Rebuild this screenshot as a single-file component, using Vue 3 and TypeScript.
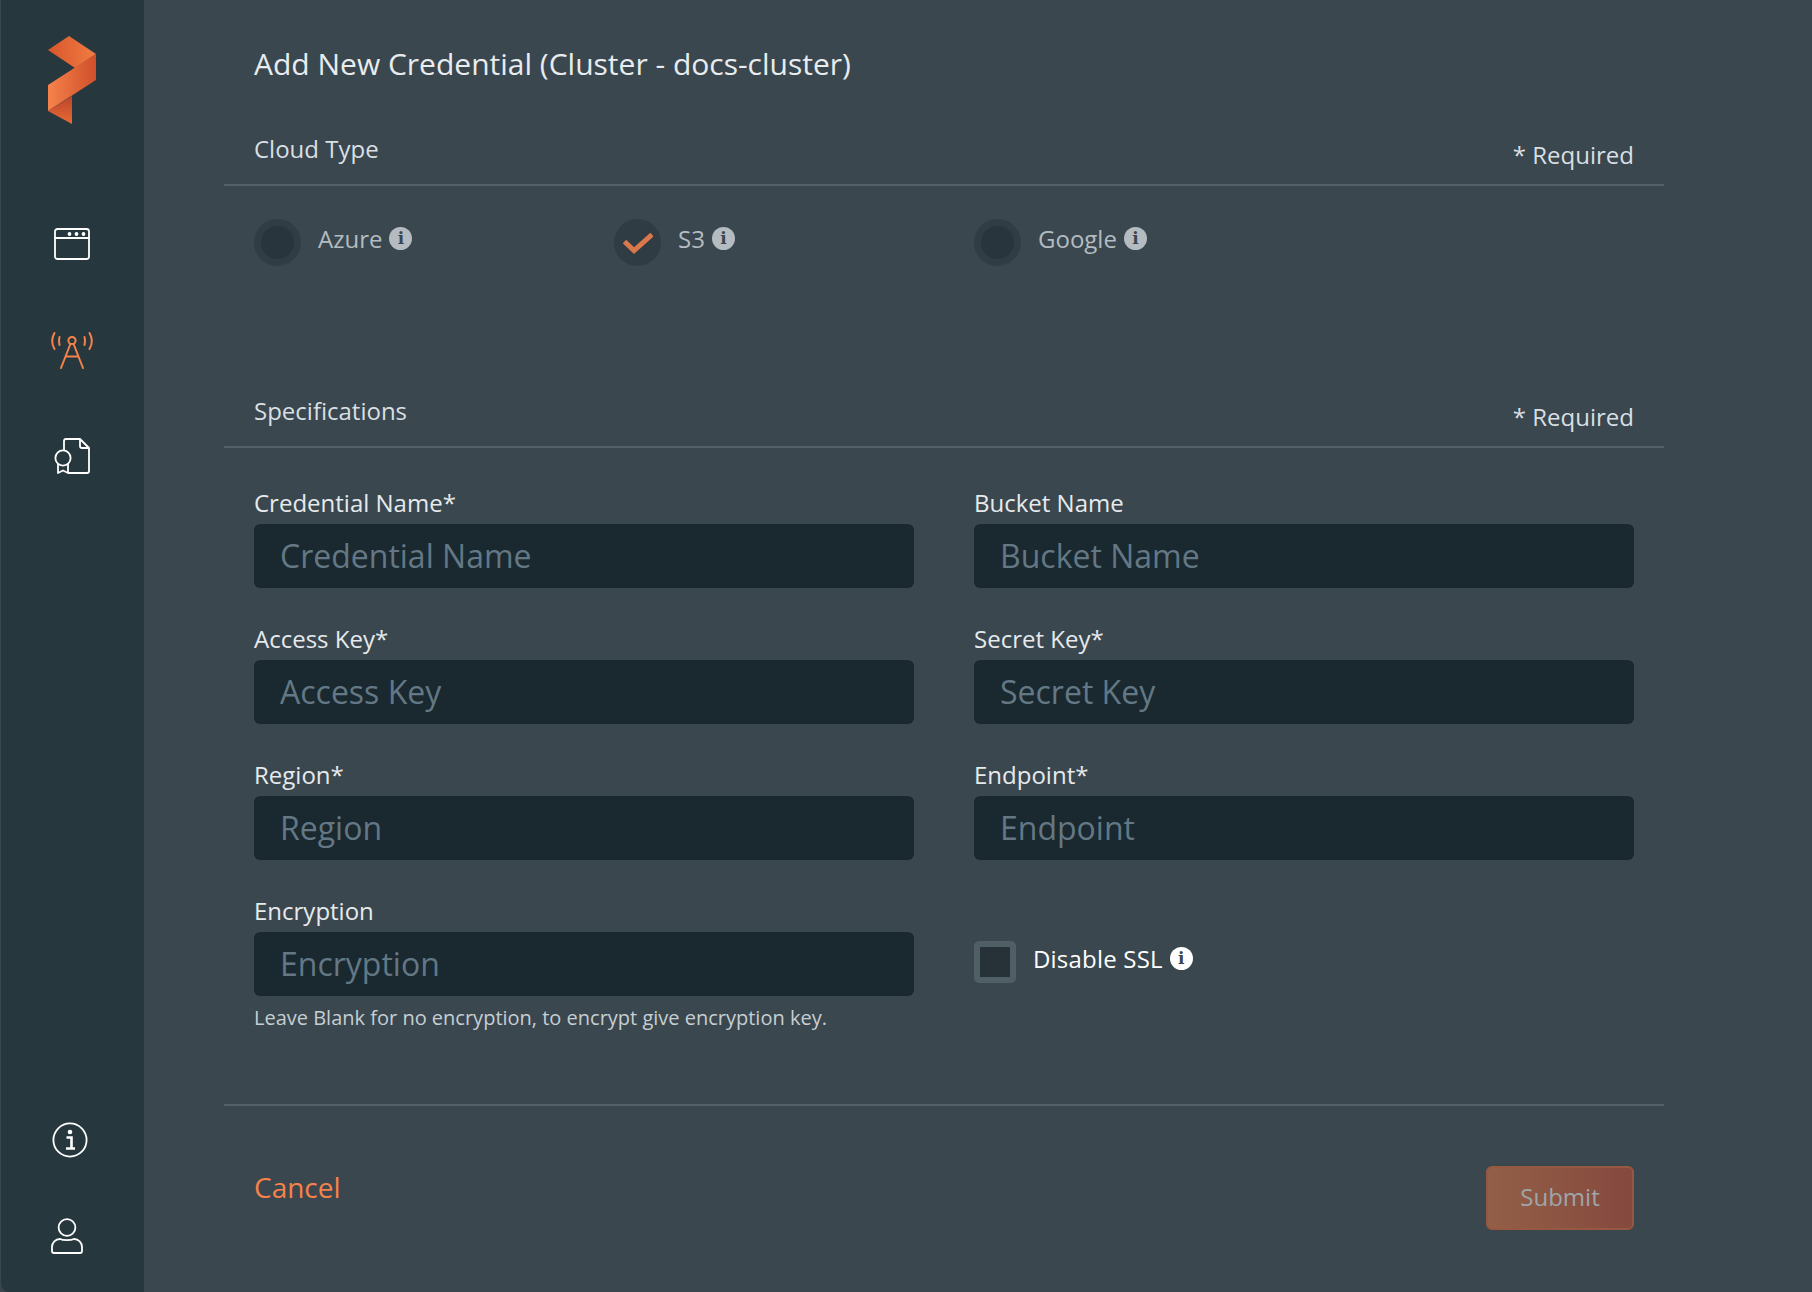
<script setup lang="ts">
interface Field {
  label: string
  placeholder: string
}

const clouds = [
  { name: 'Azure', checked: false },
  { name: 'S3', checked: true },
  { name: 'Google', checked: false },
]

const rows: Field[][] = [
  [
    { label: 'Credential Name*', placeholder: 'Credential Name' },
    { label: 'Bucket Name', placeholder: 'Bucket Name' },
  ],
  [
    { label: 'Access Key*', placeholder: 'Access Key' },
    { label: 'Secret Key*', placeholder: 'Secret Key' },
  ],
  [
    { label: 'Region*', placeholder: 'Region' },
    { label: 'Endpoint*', placeholder: 'Endpoint' },
  ],
]
</script>

<template>
  <div class="page">
    <aside class="sidebar">
      <svg class="logo" width="48" height="88" viewBox="0 0 48 88">
        <defs>
          <linearGradient id="lg1" x1="0" y1="0" x2="1" y2="0">
            <stop offset="0" stop-color="#d9562c" />
            <stop offset="1" stop-color="#f17c42" />
          </linearGradient>
          <linearGradient id="lg2" x1="0" y1="0" x2="1" y2="0">
            <stop offset="0" stop-color="#f6824a" />
            <stop offset="1" stop-color="#cf4f2a" />
          </linearGradient>
          <linearGradient id="lg3" x1="0" y1="0" x2="0" y2="1">
            <stop offset="0" stop-color="#b8452a" />
            <stop offset="1" stop-color="#ea6a36" />
          </linearGradient>
        </defs>
        <path d="M0 14 L21 0 L48 18 L27 32 Z" fill="url(#lg1)" />
        <path d="M48 18 V44 L0 75 V49 Z" fill="url(#lg2)" />
        <path d="M24 60 V88 L0 75 Z" fill="url(#lg3)" />
      </svg>

      <nav class="nav">
        <svg width="36" height="32" viewBox="0 0 36 32" fill="none" stroke="#fff" stroke-width="1.8">
          <rect x="1" y="1" width="34" height="30" rx="2.5" />
          <path d="M1 10 H35" />
          <circle cx="15.5" cy="6" r="1.9" fill="#fff" stroke="none" />
          <circle cx="22.5" cy="6" r="1.9" fill="#fff" stroke="none" />
          <circle cx="29.5" cy="6" r="1.9" fill="#fff" stroke="none" />
        </svg>
        <svg width="42" height="37" viewBox="0 0 42 37" fill="none" stroke="#f6824a" stroke-width="2" stroke-linecap="round">
          <circle cx="21" cy="8.5" r="3.6" />
          <path d="M19.4 12 L10 36 M22.6 12 L32 36 M15 24.5 H27" />
          <path d="M3.5 1 C0.6 6 0.6 12 3.5 17 M38.5 1 C41.4 6 41.4 12 38.5 17" />
          <path d="M8.5 5 C7.8 7.5 7.8 10 8.5 13 M33.5 5 C34.2 7.5 34.2 10 33.5 13" />
        </svg>
        <svg class="cert" width="36" height="36" viewBox="0 0 36 36" fill="none" stroke="#fff" stroke-width="1.8" stroke-linejoin="round">
          <path d="M10 12 V3 Q10 1 12 1 H26 L35 10 V33 Q35 35 33 35 H14" />
          <path d="M26 1 V8 Q26 10 28 10 H35" />
          <circle cx="9" cy="20" r="7.6" />
          <path d="M4 26 V35 L9 32.5 L14 35 V26" />
        </svg>
      </nav>

      <div class="nav-bottom">
        <svg width="36" height="36" viewBox="0 0 36 36" fill="none" stroke="#fff" stroke-width="1.8">
          <circle cx="18" cy="18" r="16.6" />
          <circle cx="18" cy="10" r="2.3" fill="#fff" stroke="none" />
          <path d="M14.5 15.5 H19.5 V26 M14 26.5 H23" stroke-width="2.6" />
        </svg>
        <svg class="user" width="32" height="36" viewBox="0 0 32 36" fill="none" stroke="#fff" stroke-width="1.8">
          <circle cx="16" cy="9.5" r="8.4" />
          <path d="M9 21 C12 22.6 20 22.6 23 21 C27.5 21 31 24.5 31 29 V33 Q31 35 29 35 H3 Q1 35 1 33 V29 C1 24.5 4.5 21 9 21 Z" />
        </svg>
      </div>
    </aside>

    <main class="main">
      <h1 class="title">Add New Credential (Cluster - docs-cluster)</h1>

      <section class="section cloud-section">
        <header class="section-head">
          <span class="section-name">Cloud Type</span>
          <span class="required">* Required</span>
        </header>
        <div class="clouds">
          <div v-for="cloud in clouds" :key="cloud.name" class="cloud">
            <span class="radio" :class="{ checked: cloud.checked }">
              <svg v-if="cloud.checked" width="30" height="24" viewBox="0 0 30 24" fill="none" stroke="#d9784a" stroke-width="5">
                <path d="M1.5 10.5 L11 19.5 L29 3.5" />
              </svg>
            </span>
            <span class="cloud-name">{{ cloud.name }}</span>
            <span class="info muted">i</span>
          </div>
        </div>
      </section>

      <section class="section spec-section">
        <header class="section-head">
          <span class="section-name">Specifications</span>
          <span class="required">* Required</span>
        </header>
        <div class="form">
          <div v-for="row in rows" :key="row[0].label" class="form-row">
            <div v-for="field in row" :key="field.label" class="field">
              <label class="field-label">{{ field.label }}</label>
              <input class="field-input" type="text" :placeholder="field.placeholder" />
            </div>
          </div>
          <div class="form-row">
            <div class="field">
              <label class="field-label">Encryption</label>
              <input class="field-input" type="text" placeholder="Encryption" />
              <p class="hint">Leave Blank for no encryption, to encrypt give encryption key.</p>
            </div>
            <div class="ssl">
              <span class="checkbox"></span>
              <span class="ssl-text">Disable SSL</span>
              <span class="info bright">i</span>
            </div>
          </div>
        </div>
      </section>

      <footer class="actions">
        <a class="cancel">Cancel</a>
        <button class="submit" type="button">Submit</button>
      </footer>
    </main>
  </div>
</template>

<style>
html,
body {
  margin: 0;
  background: #3a474f;
}
</style>

<style scoped>
.page {
  display: flex;
  width: 1812px;
  height: 1292px;
  overflow: hidden;
  background: #3a474f;
  font-family: "Open Sans", sans-serif;
}

.sidebar {
  box-sizing: border-box;
  display: flex;
  flex-direction: column;
  align-items: center;
  flex: 0 0 143px;
  height: 1292px;
  margin-left: 1px;
  padding: 36px 1px 38px 0;
  background: #27373e;
  border-bottom-left-radius: 8px;
}

.nav {
  display: flex;
  flex-direction: column;
  align-items: center;
  gap: 72px;
  margin-top: 104px;
}

.cert {
  margin-top: -3px;
}

.nav-bottom {
  display: flex;
  flex-direction: column;
  align-items: center;
  margin-top: auto;
  margin-right: 4px;
  gap: 60px;
}

.user {
  margin-right: 6px;
}

.main {
  box-sizing: border-box;
  width: 1440px;
  margin-left: 80px;
}

.title {
  margin: 44px 0 0 30px;
  color: #e8ecee;
  font-size: 30px;
  font-weight: 400;
  line-height: 40px;
}

.section-head {
  display: flex;
  justify-content: space-between;
  align-items: flex-end;
  height: 60px;
  padding: 0 30px;
  border-bottom: 2px solid #52606a;
}

.section-name {
  margin-bottom: 20px;
  color: #d9dfe2;
  font-size: 24px;
  line-height: 30px;
}

.required {
  margin-bottom: 14px;
  color: #d9dfe2;
  font-size: 24px;
  line-height: 30px;
}

.cloud-section {
  margin-top: 40px;
  height: 262px;
}

.clouds {
  display: flex;
  padding: 26px 0 0 30px;
}

.cloud {
  display: flex;
  align-items: center;
  width: 360px;
  height: 53px;
  color: #b4bcc1;
  font-size: 24px;
}

.radio {
  box-sizing: border-box;
  display: flex;
  align-items: center;
  justify-content: center;
  width: 47px;
  height: 47px;
  margin: 8px 17px 0 0;
  border: 7px solid #303d45;
  border-radius: 50%;
  background: #29353c;
}

.radio.checked {
  border: 0;
  background: #2f3c44;
}

.info {
  display: flex;
  align-items: center;
  justify-content: center;
  width: 23px;
  height: 23px;
  margin-left: 7px;
  border-radius: 50%;
  color: #3a474f;
  font-family: "DejaVu Serif", serif;
  font-size: 17px;
  font-weight: 700;
  line-height: 1;
}

.info.muted {
  background: #b4bcc1;
}

.info.bright {
  background: #fff;
}

.form {
  padding: 39px 30px 38px;
}

.form-row {
  display: grid;
  grid-template-columns: 660px 660px;
  gap: 60px;
  margin-bottom: 35px;
}

.field-label {
  display: block;
  margin-bottom: 5px;
  color: #e6eaec;
  font-size: 24px;
  line-height: 32px;
}

.field-input {
  box-sizing: border-box;
  display: block;
  width: 100%;
  height: 64px;
  padding: 0 26px 2px;
  border: 0;
  border-radius: 6px;
  background: #1a2830;
  color: #fff;
  font-family: inherit;
  font-size: 32px;
  outline: none;
}

.field-input::placeholder {
  color: #637884;
  opacity: 1;
}

.hint {
  margin: 9px 0 0;
  color: #c6ced2;
  font-size: 20px;
  line-height: 26px;
}

.ssl {
  display: flex;
  align-items: center;
  align-self: start;
  height: 42px;
  margin-top: 42px;
}

.checkbox {
  box-sizing: border-box;
  width: 42px;
  height: 42px;
  margin: 7px 17px 0 0;
  border: 6px solid #505e66;
  border-radius: 5px;
  background: #263238;
}

.ssl-text {
  color: #fff;
  font-size: 24px;
  letter-spacing: 0.2px;
}

.actions {
  display: flex;
  justify-content: space-between;
  align-items: flex-start;
  height: 130px;
  padding: 60px 30px 0;
  border-top: 2px solid #52606a;
}

.cancel {
  margin-top: 1px;
  color: #f6824a;
  font-size: 28px;
  line-height: 40px;
}

.submit {
  box-sizing: border-box;
  width: 148px;
  height: 64px;
  padding: 0 0 4px;
  border: 2px solid #96583f;
  border-radius: 6px;
  background: linear-gradient(90deg, #935f47, #85493e);
  color: #9ea6aa;
  font-family: inherit;
  font-size: 24px;
}
</style>
